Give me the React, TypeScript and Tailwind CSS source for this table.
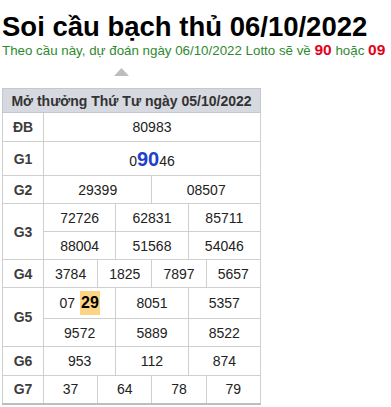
import type { ReactNode } from "react";

const cell = "border border-[#cfcfcf] p-0 text-center align-middle";
const label = "border border-[#cfcfcf] p-0 text-center align-middle font-bold text-[#3d3d3d]";

function Num({ children, span }: { children: ReactNode; span: number }) {
  return (
    <td colSpan={span} className={cell}>
      {children}
    </td>
  );
}

export default function App() {
  const g3 = [
    ["72726", "62831", "85711"],
    ["88004", "51568", "54046"],
  ];

  return (
    <div className="w-[391px] h-[407px] bg-white pl-[2px] font-['Liberation_Sans',Arial,sans-serif] text-[#222]">
      {/* TITLE */}
      <h1 className="pt-[11px] text-[27.5px] leading-[31px] font-bold text-black whitespace-nowrap">
        Soi cầu bạch thủ 06/10/2022
      </h1>

      {/* SUBTITLE */}
      <div className="text-[13.33px] leading-[14px] h-[14px] text-[#2f8a2f] whitespace-nowrap">
        Theo cầu này, dự đoán ngày 06/10/2022 Lotto sẽ về{" "}
        <span className="text-[15.5px] leading-none font-bold text-[#e3001b]">90</span> hoặc{" "}
        <span className="text-[15.5px] leading-none font-bold text-[#e3001b]">09</span>
      </div>

      {/* ARROW */}
      <div className="ml-[112px] mt-[12px] h-[8px]">
        <svg width="15" height="8" viewBox="0 0 15 8">
          <polygon points="7.5,0 15,8 0,8" fill="#bdbdbd" />
        </svg>
      </div>

      {/* TABLE */}
      <table className="mt-[12px] w-[259px] table-fixed border-collapse text-[14px] leading-none">
        <colgroup>
          <col className="w-[41px]" />
          {Array.from({ length: 12 }).map((_, i) => (
            <col key={i} />
          ))}
        </colgroup>
        <thead>
          <tr className="h-[24px] bg-[#d6d9df]">
            <th colSpan={13} className="border border-[#c4c7cd] p-0 font-bold text-[14px] text-[#333]">
              Mở thưởng Thứ Tư ngày 05/10/2022
            </th>
          </tr>
        </thead>
        <tbody>
          <tr className="h-[29px]">
            <td className={label}>ĐB</td>
            <Num span={12}>80983</Num>
          </tr>
          <tr className="h-[34px]">
            <td className={label}>G1</td>
            <Num span={12}>
              0<span className="text-[20px] font-bold text-[#1e40d0]">90</span>46
            </Num>
          </tr>
          <tr className="h-[28px]">
            <td className={label}>G2</td>
            <Num span={6}>29399</Num>
            <Num span={6}>08507</Num>
          </tr>
          {g3.map((row, r) => (
            <tr key={r} className="h-[28px]">
              {r === 0 && (
                <td rowSpan={2} className={label}>
                  G3
                </td>
              )}
              {row.map((n) => (
                <Num key={n} span={4}>
                  {n}
                </Num>
              ))}
            </tr>
          ))}
          <tr className="h-[28px]">
            <td className={label}>G4</td>
            <Num span={3}>3784</Num>
            <Num span={3}>1825</Num>
            <Num span={3}>7897</Num>
            <Num span={3}>5657</Num>
          </tr>
          <tr className="h-[31px]">
            <td rowSpan={2} className={label}>
              G5
            </td>
            <Num span={4}>
              07{" "}
              <span className="ml-[1px] inline-block bg-[#fcd483] px-[1px] py-[4px] text-[16px] font-bold text-black">
                29
              </span>
            </Num>
            <Num span={4}>8051</Num>
            <Num span={4}>5357</Num>
          </tr>
          <tr className="h-[28px]">
            <Num span={4}>9572</Num>
            <Num span={4}>5889</Num>
            <Num span={4}>8522</Num>
          </tr>
          <tr className="h-[29px]">
            <td className={label}>G6</td>
            <Num span={4}>953</Num>
            <Num span={4}>112</Num>
            <Num span={4}>874</Num>
          </tr>
          <tr className="h-[28px] border-b-2 border-b-[#bdbdbd]">
            <td className={label}>G7</td>
            <Num span={3}>37</Num>
            <Num span={3}>64</Num>
            <Num span={3}>78</Num>
            <Num span={3}>79</Num>
          </tr>
        </tbody>
      </table>
    </div>
  );
}
